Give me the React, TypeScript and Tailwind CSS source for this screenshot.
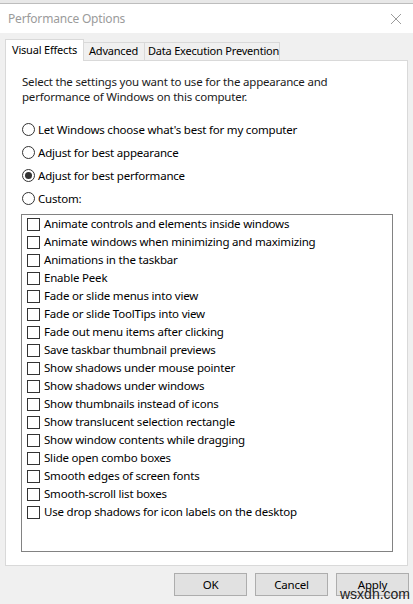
const effects = [
  "Animate controls and elements inside windows",
  "Animate windows when minimizing and maximizing",
  "Animations in the taskbar",
  "Enable Peek",
  "Fade or slide menus into view",
  "Fade or slide ToolTips into view",
  "Fade out menu items after clicking",
  "Save taskbar thumbnail previews",
  "Show shadows under mouse pointer",
  "Show shadows under windows",
  "Show thumbnails instead of icons",
  "Show translucent selection rectangle",
  "Show window contents while dragging",
  "Slide open combo boxes",
  "Smooth edges of screen fonts",
  "Smooth-scroll list boxes",
  "Use drop shadows for icon labels on the desktop",
];

const radios = [
  { label: "Let Windows choose what's best for my computer", checked: false },
  { label: "Adjust for best appearance", checked: false },
  { label: "Adjust for best performance", checked: true },
  { label: "Custom:", checked: false },
];

const Radio = ({ checked }: { checked: boolean }) => (
  <span className="flex h-[13px] w-[13px] shrink-0 items-center justify-center rounded-full border border-[#333333] bg-white">
    {checked && <span className="h-[7px] w-[7px] rounded-full bg-[#333333]" />}
  </span>
);

export default function App() {
  return (
    <div
      className="relative h-[604px] w-[413px] overflow-hidden whitespace-nowrap bg-[#f0f0f0] text-[11.5px] tracking-[-0.2px] text-black"
      style={{ fontFamily: '"Segoe UI", "Noto Sans", sans-serif' }}
    >
      {/* window behind */}
      <div className="h-[4px] border-b border-[#bdbdbd] bg-[#e8e8e8]" />

      {/* title bar */}
      <div className="flex h-[29px] items-center justify-between bg-white pl-[8px] pr-[8px]">
        <span className="text-[12px] text-[#9b9b9b]">Performance Options</span>
        <svg width="12" height="12" viewBox="0 0 12 12" className="mr-[3px]">
          <path d="M1 1 L11 11 M11 1 L1 11" stroke="#9b9b9b" strokeWidth="1" />
        </svg>
      </div>

      <div className="px-[5px] pt-[6px]">
        {/* tabs */}
        <div className="relative z-10 flex h-[22px] items-end text-[11px]">
          <div className="flex h-[22px] w-[79px] items-center border border-b-0 border-[#d9d9d9] bg-white pl-[6px]">
            Visual Effects
          </div>
          <div className="flex h-[19px] w-[61px] items-center border border-l-0 border-[#d9d9d9] bg-[#f0f0f0] pl-[5px]">
            Advanced
          </div>
          <div className="flex h-[19px] w-[135px] items-center border border-l-0 border-[#d9d9d9] bg-[#f0f0f0] pl-[3px]">
            Data Execution Prevention
          </div>
        </div>

        {/* panel */}
        <div className="-mt-px h-[506px] border border-[#d9d9d9] bg-white pl-[16px] pr-[14px] pt-[13px]">
          <div className="leading-[15px] text-[#1a1a1a]">
            <div>Select the settings you want to use for the appearance and</div>
            <div>performance of Windows on this computer.</div>
          </div>

          <div className="mt-[14px] flex flex-col">
            {radios.map((r) => (
              <div key={r.label} className="flex h-[23px] items-center gap-[3px]">
                <Radio checked={r.checked} />
                <span>{r.label}</span>
              </div>
            ))}
          </div>

          <div className="ml-[-1px] mt-[4px] h-[338px] border border-[#828282] bg-white">
            {effects.map((e) => (
              <div key={e} className="flex h-[18px] items-center gap-[4px] pl-[5px]">
                <span className="h-[13px] w-[13px] shrink-0 border border-[#333333] bg-white" />
                <span>{e}</span>
              </div>
            ))}
          </div>
        </div>
      </div>

      {/* buttons */}
      <div className="mt-[7px] flex justify-end gap-[8px] pr-[4px]">
        {["OK", "Cancel", "Apply"].map((b) => (
          <button
            key={b}
            className="flex h-[23px] w-[73px] items-center justify-center border border-[#adadad] bg-[#e1e1e1]"
          >
            {b}
          </button>
        ))}
      </div>

      {/* watermark */}
      <span
        className="absolute left-[340px] top-[584px] text-[14px] tracking-normal text-[#222222]"
        style={{ fontFamily: '"Liberation Sans", sans-serif' }}
      >
        wsxdn.com
      </span>
    </div>
  );
}
